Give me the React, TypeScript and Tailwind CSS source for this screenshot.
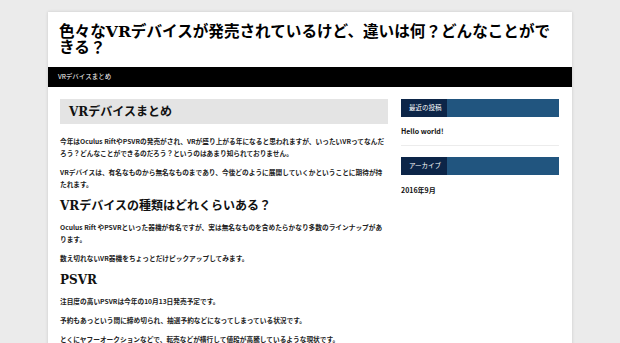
const body = "font-['Noto_Sans_CJK_JP','Noto_Sans',sans-serif]";
const serif = "font-['DejaVu_Serif','Noto_Sans_CJK_JP',serif]";

const Para = ({ children }: { children: React.ReactNode }) => (
  <p className={`mt-[7px] text-[6.7px] font-bold leading-[12px] text-[#222] ${body}`}>{children}</p>
);

const Widget = ({ title, children }: { title: string; children: React.ReactNode }) => (
  <div className="mb-[11px]">
    <div className="flex h-[18px] bg-[#21557f]">
      <div className={`flex w-[46px] items-center bg-[#0c2548] pl-[8px] text-[6.5px] text-white ${body}`}>{title}</div>
    </div>
    {children}
  </div>
);

export default function App() {
  return (
    <div className="min-h-[343px] w-[620px] overflow-hidden bg-[#ebebeb] pt-[12px]">
      <div className="mx-auto w-[524px] bg-white shadow-[0_0_3px_rgba(0,0,0,0.15)]">
        <header className="px-[11px] pb-[11px] pt-[12px]">
          <h1 className={`text-[15.6px] font-bold leading-[16px] text-black ${serif}`}>
            色々なVRデバイスが発売されているけど、違いは何？どんなことができる？
          </h1>
        </header>
        <nav className={`flex h-[20px] items-center bg-black px-[10px] text-[6.5px] text-white ${body}`}>
          VRデバイスまとめ
        </nav>
        <main className="flex gap-[13px] px-[12px] pt-[12px]">
          <article className="w-[328px] pb-[4px]">
            <h2 className={`flex h-[25px] items-center bg-[#e4e4e4] pl-[9px] text-[12px] font-bold text-[#111] ${serif}`}>
              VRデバイスまとめ
            </h2>
            <div className="pt-[4px]">
              <Para>
                今年はOculus RiftやPSVRの発売がされ、VRが盛り上がる年になると思われますが、いったいVRってなんだろう？どんなことができるのだろう？というのはあまり知られておりません。
              </Para>
              <Para>
                VRデバイスは、有名なものから無名なものまであり、今後どのように展開していくかということに期待が持たれます。
              </Para>
              <h3 className={`mt-[8px] text-[12px] font-bold leading-[16px] text-[#111] ${serif}`}>
                VRデバイスの種類はどれくらいある？
              </h3>
              <Para>
                Oculus Rift やPSVRといった器機が有名ですが、実は無名なものを含めたらかなり多数のラインナップがあります。
              </Para>
              <Para>数え切れないVR器機をちょっとだけピックアップしてみます。</Para>
              <h4 className={`mt-[8px] text-[12px] font-bold leading-[16px] text-[#111] ${serif}`}>PSVR</h4>
              <Para>注目度の高いPSVRは今年の10月13日発売予定です。</Para>
              <Para>予約もあっという間に締め切られ、抽選予約などになってしまっている状況です。</Para>
              <Para>とくにヤフーオークションなどで、転売などが横行して値段が高騰しているような現状です。</Para>
            </div>
          </article>
          <aside className="w-[158px]">
            <Widget title="最近の投稿">
              <div className={`border-b border-[#ececec] py-[9px] text-[7px] font-bold leading-[10px] text-[#111] ${body}`}>
                Hello world!
              </div>
            </Widget>
            <Widget title="アーカイブ">
              <div className={`py-[10px] text-[7px] font-bold leading-[10px] text-[#111] ${body}`}>2016年9月</div>
            </Widget>
          </aside>
        </main>
      </div>
    </div>
  );
}
